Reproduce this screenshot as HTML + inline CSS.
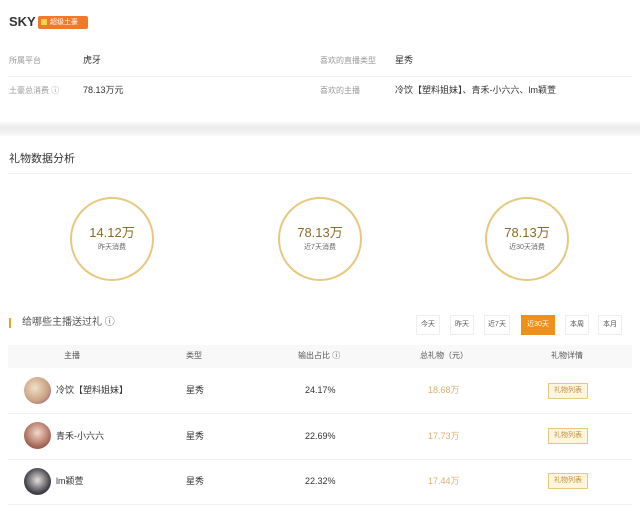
<!DOCTYPE html>
<html><head><meta charset="utf-8"><style>
*{margin:0;padding:0;box-sizing:border-box}
body{width:640px;height:507px;overflow:hidden;background:#fff;font-family:"Liberation Sans","Noto Sans CJK SC",sans-serif;color:#444;position:relative}
.a{position:absolute;white-space:nowrap;line-height:12px}
.l{font-size:8px;color:#999}
.v{font-size:9px;color:#333}
.c{position:absolute;width:84px;height:84px;border:2px solid #e8c77e;border-radius:50%;text-align:center}
.c b{display:block;margin-top:26px;font-size:13px;line-height:16px;color:#8a6a2a;font-weight:normal}
.c i{display:block;font-style:normal;font-size:7px;line-height:9px;color:#666;margin-top:2px}
.btn{position:absolute;top:315px;height:20px;width:24px;font-size:7px;color:#555;border:1px solid #eee;text-align:center;line-height:18px}
.av{position:absolute;left:24px;width:27px;height:27px;border-radius:50%}
.tag{position:absolute;left:548px;width:40px;height:16px;border:1px solid #e8c77e;background:#fdf5de;font-size:7px;color:#c09040;text-align:center;line-height:14px}
.line{position:absolute;left:8px;width:624px;height:1px;background:#f0f0f0}
</style></head><body>
<div class="a" style="left:9px;top:14px;font-size:13px;line-height:16px;font-weight:bold;color:#333">SKY</div>
<div class="a" style="left:38px;top:16px;width:50px;height:13px;background:#f07a2c;border-radius:2px;font-size:7px;color:#fff;line-height:13px;padding-left:12px">超级土豪</div>
<div class="a" style="left:41px;top:19px;width:6px;height:6px;background:#fbd04a"></div>
<div class="a l" style="left:9px;top:55px">所属平台</div>
<div class="a v" style="left:83px;top:54px">虎牙</div>
<div class="a l" style="left:320px;top:55px">喜欢的直播类型</div>
<div class="a v" style="left:395px;top:54px">星秀</div>
<div class="line" style="top:76px"></div>
<div class="a l" style="left:9px;top:85px">土豪总消费 ⓘ</div>
<div class="a v" style="left:83px;top:84px">78.13万元</div>
<div class="a l" style="left:320px;top:85px">喜欢的主播</div>
<div class="a v" style="left:395px;top:84px">冷饮【塑料姐妹】、青禾-小六六、lm颖萱</div>
<div class="a" style="left:0;top:122px;width:640px;height:14px;background:linear-gradient(#fafafa,#ececec 40%,#f0f0f0 70%,#fafafa)"></div>
<div class="a" style="left:9px;top:152px;font-size:11px;line-height:14px;color:#333">礼物数据分析</div>
<div class="line" style="top:173px"></div>
<div class="c" style="left:70px;top:197px"><b>14.12万</b><i>昨天消费</i></div>
<div class="c" style="left:278px;top:197px"><b>78.13万</b><i>近7天消费</i></div>
<div class="c" style="left:485px;top:197px"><b>78.13万</b><i>近30天消费</i></div>
<div class="a" style="left:9px;top:318px;width:2px;height:10px;background:#f0a020"></div>
<div class="a" style="left:22px;top:317px;font-size:10px;color:#555">给哪些主播送过礼 ⓘ</div>
<div class="btn" style="left:416px">今天</div>
<div class="btn" style="left:450px">昨天</div>
<div class="btn" style="left:484px;width:26px">近7天</div>
<div class="btn" style="left:521px;width:34px;background:#f0901c;color:#fff;border-color:#f0901c">近30天</div>
<div class="btn" style="left:565px">本周</div>
<div class="btn" style="left:598px">本月</div>
<div class="a" style="left:8px;top:345px;width:624px;height:23px;background:#f8f8f8"></div>
<div class="a l" style="left:64px;top:350px;color:#555">主播</div>
<div class="a l" style="left:186px;top:350px;color:#555">类型</div>
<div class="a l" style="left:298px;top:350px;color:#555">输出占比 ⓘ</div>
<div class="a l" style="left:420px;top:350px;color:#555">总礼物（元）</div>
<div class="a l" style="left:551px;top:350px;color:#555">礼物详情</div>
<div class="av" style="top:377px;background:radial-gradient(circle at 40% 40%,#f0e0c8,#c8a080 60%,#7a3aa0)"></div>
<div class="a v" style="left:56px;top:384px">冷饮【塑料姐妹】</div>
<div class="a v" style="left:186px;top:384px">星秀</div>
<div class="a v" style="left:305px;top:384px">24.17%</div>
<div class="a v" style="left:428px;top:384px;color:#d8b070">18.68万</div>
<div class="tag" style="top:383px">礼物列表</div>
<div class="line" style="top:413px"></div>
<div class="av" style="top:422px;background:radial-gradient(circle at 50% 40%,#f4d8c8,#a06050 70%)"></div>
<div class="a v" style="left:56px;top:430px">青禾-小六六</div>
<div class="a v" style="left:186px;top:430px">星秀</div>
<div class="a v" style="left:305px;top:430px">22.69%</div>
<div class="a v" style="left:428px;top:430px;color:#d8b070">17.73万</div>
<div class="tag" style="top:428px">礼物列表</div>
<div class="line" style="top:459px"></div>
<div class="av" style="top:468px;background:radial-gradient(circle at 50% 45%,#e8e0e0,#404048 65%)"></div>
<div class="a v" style="left:56px;top:475px">lm颖萱</div>
<div class="a v" style="left:186px;top:475px">星秀</div>
<div class="a v" style="left:305px;top:475px">22.32%</div>
<div class="a v" style="left:428px;top:475px;color:#d8b070">17.44万</div>
<div class="tag" style="top:473px">礼物列表</div>
<div class="line" style="top:504px"></div>
</body></html>
